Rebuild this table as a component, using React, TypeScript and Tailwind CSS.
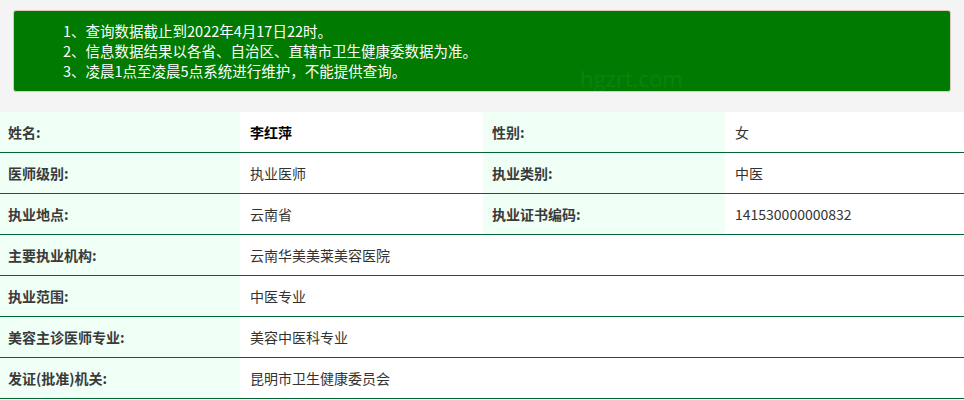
const font = "font-['Microsoft_YaHei','Noto_Sans_CJK_SC',sans-serif]";

const notices = [
  "1、查询数据截止到2022年4月17日22时。",
  "2、信息数据结果以各省、自治区、直辖市卫生健康委数据为准。",
  "3、凌晨1点至凌晨5点系统进行维护，不能提供查询。",
];

type Row = { label: string; value: string; bold?: boolean; label2?: string; value2?: string };

const rows: Row[] = [
  { label: "姓名:", value: "李红萍", bold: true, label2: "性别:", value2: "女" },
  { label: "医师级别:", value: "执业医师", label2: "执业类别:", value2: "中医" },
  { label: "执业地点:", value: "云南省", label2: "执业证书编码:", value2: "141530000000832" },
  { label: "主要执业机构:", value: "云南华美美莱美容医院" },
  { label: "执业范围:", value: "中医专业" },
  { label: "美容主诊医师专业:", value: "美容中医科专业" },
  { label: "发证(批准)机关:", value: "昆明市卫生健康委员会" },
];

export default function App() {
  return (
    <div className={`w-[964px] h-[400px] overflow-hidden bg-[#f4f4f4] text-[14px] ${font}`}>
      <div className="pt-[10px] px-[13px] pb-[20px]">
        <div className="relative overflow-hidden rounded-[3px] border border-[#d9c9c0] bg-[#007a00] h-[82px] pl-[49px] pt-[10px] text-white leading-[20px]">
          {notices.map((n) => (
            <div key={n} className="text-[14.5px]">{n}</div>
          ))}
          {/* faint watermark */}
          <span className="absolute left-[566px] top-[56px] text-[22px] leading-none text-white/5 font-['Open_Sans',sans-serif]">
            hgzrt.com
          </span>
        </div>
      </div>
      <div className="bg-white">
        {rows.map((r) => (
          <div key={r.label} className="flex h-[41px] border-b border-[#006633] items-center">
            <div className="w-[240px] h-full flex items-center pl-[8px] bg-[#efffF6] font-bold text-[#3a3a3a]">
              {r.label}
            </div>
            <div className={`w-[243px] h-full flex items-center pl-[10px] ${r.bold ? "font-bold text-black" : "text-[#333]"}`}>
              {r.value}
            </div>
            {r.label2 !== undefined && (
              <>
                <div className="w-[242px] h-full flex items-center pl-[9px] bg-[#efffF6] font-bold text-[#3a3a3a]">
                  {r.label2}
                </div>
                <div className="flex-1 h-full flex items-center pl-[10px] text-[#333]">{r.value2}</div>
              </>
            )}
          </div>
        ))}
      </div>
    </div>
  );
}
